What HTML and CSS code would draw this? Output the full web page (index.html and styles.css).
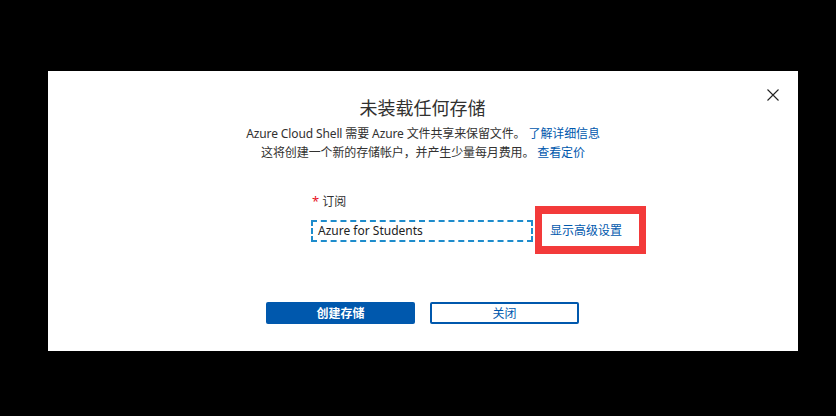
FILE: index.html
```html
<!DOCTYPE html>
<html lang="zh-CN">
<head>
<meta charset="utf-8">
<title>未装载任何存储</title>
<link rel="stylesheet" href="styles.css">
</head>
<body>
<div class="dialog">
  <button class="close" aria-label="关闭">
    <svg width="12" height="12" viewBox="0 0 12 12"><path d="M0.5 0.5 L11.5 11.5 M11.5 0.5 L0.5 11.5" stroke="#222" stroke-width="1.1" fill="none"/></svg>
  </button>
  <h1 class="title">未装载任何存储</h1>
  <p class="desc">Azure Cloud Shell 需要 Azure 文件共享来保留文件。 <a class="link" href="#">了解详细信息</a></p>
  <p class="desc">这将创建一个新的存储帐户，并产生少量每月费用。 <a class="link" href="#">查看定价</a></p>
  <div class="form">
    <div class="label"><span class="req">*</span> 订阅</div>
    <div class="row">
      <div class="input">Azure for Students</div>
      <a class="advanced" href="#">显示高级设置</a>
    </div>
  </div>
  <div class="actions">
    <button class="btn primary">创建存储</button>
    <button class="btn secondary">关闭</button>
  </div>
</div>
</body>
</html>
```
FILE: styles.css
```css
html, body {
  margin: 0;
  padding: 0;
  background: #000;
  width: 836px;
  height: 416px;
  overflow: hidden;
}
body {
  font-family: "Noto Sans", "Noto Sans CJK SC", sans-serif;
  color: #323130;
}
.dialog {
  position: relative;
  margin: 71px 0 0 48px;
  width: 750px;
  height: 280px;
  background: #fff;
  display: flex;
  flex-direction: column;
  align-items: center;
  box-sizing: border-box;
  padding-top: 24px;
}
.close {
  position: absolute;
  top: 18px;
  right: 19px;
  width: 12px;
  height: 12px;
  padding: 0;
  border: 0;
  background: none;
  display: flex;
}
.title {
  margin: 0 0 3px;
  font-size: 18px;
  line-height: 26px;
  font-weight: 400;
  color: #323130;
  margin-left: -1px;
}
.desc {
  margin: 0;
  font-size: 12px;
  letter-spacing: -0.12px;
  line-height: 19px;
  color: #323130;
}
.link {
  color: #0058ad;
  text-decoration: none;
}
.form {
  align-self: flex-start;
  margin: 31px 0 0 263px;
}
.label {
  font-size: 12px;
  line-height: 16px;
  color: #323130;
  padding-left: 1px;
}
.req {
  color: #e81123;
  font-size: 13px;
}
.row {
  margin-top: 10px;
  display: flex;
  align-items: center;
  height: 22px;
}
.input {
  box-sizing: border-box;
  width: 222px;
  height: 22px;
  border: 2px dashed #1e8ccc;
  font-size: 12px;
  line-height: 18px;
  padding-left: 5px;
  color: #222;
}
.advanced {
  position: relative;
  margin-left: 17px;
  font-size: 12px;
  color: #0058ad;
  text-decoration: none;
  line-height: 16px;
}
.advanced::after {
  content: "";
  position: absolute;
  left: -15px;
  top: -17px;
  width: 97px;
  height: 32px;
  border: 7px solid #f33a3a;
  border-top-width: 8px;
  border-bottom-width: 8px;
}
.actions {
  margin-top: 60px;
  display: flex;
  gap: 15px;
  margin-left: -1px;
}
.btn {
  box-sizing: border-box;
  width: 149px;
  height: 22px;
  font-family: "Noto Sans", "Noto Sans CJK SC", sans-serif;
  font-size: 12px;
  padding: 0;
  border-radius: 2px;
}
.primary {
  background: #0058ad;
  color: #fff;
  border: 0;
  font-weight: 700;
}
.secondary {
  background: #fff;
  color: #0058ad;
  border: 2px solid #0058ad;
}
```
